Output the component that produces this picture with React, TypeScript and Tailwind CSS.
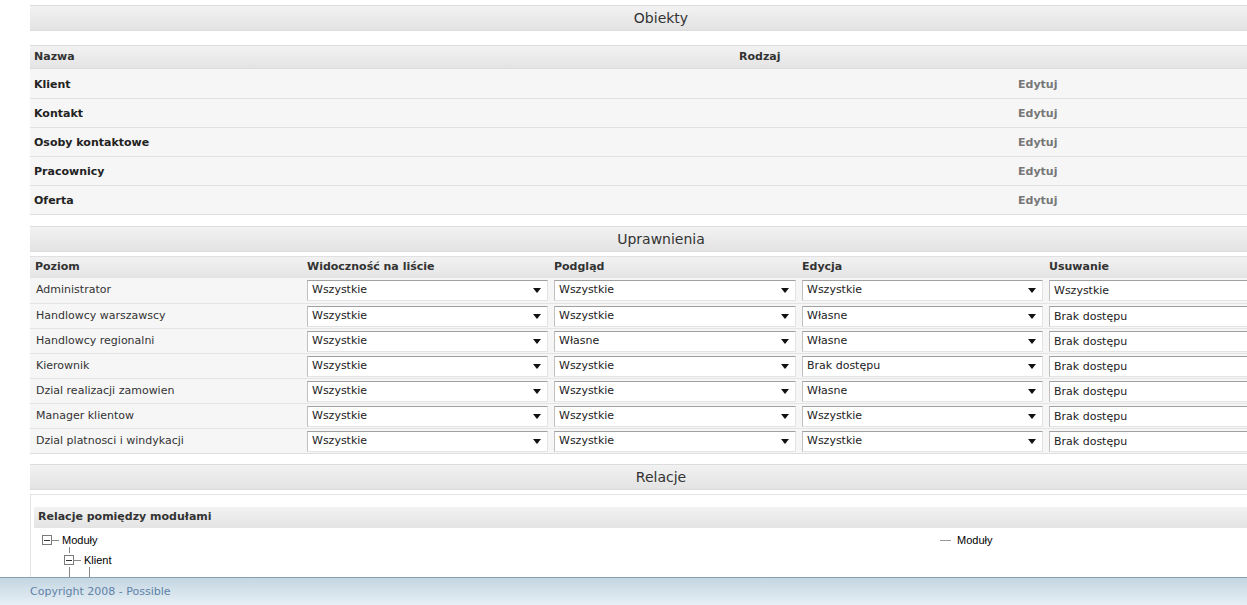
import React from "react";

const font = { fontFamily: '"DejaVu Sans", Verdana, sans-serif' };

function SectionBar({ title }: { title: string }) {
  return (
    <div className="h-[26px] border-y border-[#dcdcdc] bg-gradient-to-b from-[#f2f2f2] to-[#e3e3e3] text-center text-[14px] leading-[24px] text-[#333]">
      {title}
    </div>
  );
}

function Select({ value }: { value: string }) {
  return (
    <div className="flex h-[21px] items-center justify-between border border-[#e3e3e3] border-t-[#a0a0a0] border-l-[#c0c0c0] bg-white pl-[4px] pr-[6px] text-[11px] text-[#222]">
      <span>{value}</span>
      <svg width="8" height="5" viewBox="0 0 8 5">
        <path d="M0 0 H8 L4 5 Z" fill="#111" />
      </svg>
    </div>
  );
}

const objects = ["Klient", "Kontakt", "Osoby kontaktowe", "Pracownicy", "Oferta"];

const perms: [string, string, string, string, string][] = [
  ["Administrator", "Wszystkie", "Wszystkie", "Wszystkie", "Wszystkie"],
  ["Handlowcy warszawscy", "Wszystkie", "Wszystkie", "Własne", "Brak dostępu"],
  ["Handlowcy regionalni", "Wszystkie", "Własne", "Własne", "Brak dostępu"],
  ["Kierownik", "Wszystkie", "Wszystkie", "Brak dostępu", "Brak dostępu"],
  ["Dzial realizacji zamowien", "Wszystkie", "Wszystkie", "Własne", "Brak dostępu"],
  ["Manager klientow", "Wszystkie", "Wszystkie", "Wszystkie", "Brak dostępu"],
  ["Dzial platnosci i windykacji", "Wszystkie", "Wszystkie", "Wszystkie", "Brak dostępu"],
];

function MinusBox() {
  return (
    <span className="flex h-[10px] w-[10px] items-center justify-center border border-[#7a7a7a] bg-white">
      <span className="h-[1px] w-[6px] bg-[#333]" />
    </span>
  );
}

export default function App() {
  return (
    <div className="relative h-[605px] w-[1247px] overflow-hidden bg-white" style={font}>
      <div className="flex h-[577px] flex-col overflow-hidden">
        <div className="ml-[30px] w-[1262px] shrink-0 pt-[5px]">
          <SectionBar title="Obiekty" />

          {/* Obiekty table */}
          <div className="mt-[14px] border-b border-[#dedede]">
            <div className="grid h-[24px] grid-cols-[709px_279px_1fr] items-center border-y border-[#dcdcdc] bg-gradient-to-b from-[#f2f2f2] to-[#e4e4e4] text-[11px] font-bold text-[#333]">
              <span className="pl-[4px]">Nazwa</span>
              <span>Rodzaj</span>
              <span />
            </div>
            {objects.map((o, i) => (
              <div
                key={o}
                className={`grid h-[29px] grid-cols-[709px_279px_1fr] items-center bg-[#f6f6f6] pt-[3px] text-[11px] font-bold ${i > 0 ? "border-t border-[#e2e2e2]" : ""}`}
              >
                <span className="pl-[4px] text-[#222]">{o}</span>
                <span />
                <span className="text-[#777]">Edytuj</span>
              </div>
            ))}
          </div>

          <div className="mt-[11px]">
            <SectionBar title="Uprawnienia" />
          </div>

          {/* Uprawnienia table */}
          <div className="mt-[4px] border-b border-[#dedede] bg-[#f6f6f6]">
            <div className="grid h-[22px] grid-cols-[277px_247px_248px_247px_1fr] items-center border-t border-[#e0e0e0] bg-gradient-to-b from-[#f2f2f2] to-[#e4e4e4] text-[11px] font-bold text-[#333]">
              <span className="pl-[5px]">Poziom</span>
              <span>Widoczność na liście</span>
              <span>Podgląd</span>
              <span>Edycja</span>
              <span>Usuwanie</span>
            </div>
            {perms.map((p, i) => (
              <div
                key={p[0]}
                className={`grid h-[25px] grid-cols-[277px_247px_248px_247px_1fr] items-center text-[11px] text-[#333] ${i > 0 ? "border-t border-[#e4e4e4]" : ""}`}
              >
                <span className="pl-[6px]">{p[0]}</span>
                <div className="pr-[6px]">
                  <Select value={p[1]} />
                </div>
                <div className="pr-[6px]">
                  <Select value={p[2]} />
                </div>
                <div className="pr-[6px]">
                  <Select value={p[3]} />
                </div>
                <div className="h-[21px] border border-[#e3e3e3] border-t-[#a0a0a0] border-l-[#c0c0c0] bg-white pl-[4px] leading-[19px] text-[#222]">
                  {p[4]}
                </div>
              </div>
            ))}
          </div>

          <div className="mt-[10px]">
            <SectionBar title="Relacje" />
          </div>

          {/* Relacje box */}
          <div className="mt-[4px] border-l border-t border-[#e4e4e4] px-[3px] pt-[12px]">
            <div className="flex h-[21px] items-center bg-gradient-to-b from-[#f2f2f2] to-[#e4e4e4] pl-[4px] text-[11px] font-bold text-[#333]">
              Relacje pomiędzy modułami
            </div>
            <div className="relative flex pt-[5px]" style={{ fontFamily: '"Liberation Sans", Arial, sans-serif' }}>
              <div className="w-[906px] pl-[8px] text-[11px] text-black">
                <div className="flex h-[14px] items-center">
                  <MinusBox />
                  <span className="h-[1px] w-[7px] bg-[#888]" />
                  <span className="ml-[3px]">Moduły</span>
                </div>
                <div className="ml-[27px] h-[6px] w-[1px] bg-[#888]" />
                <div className="ml-[22px] flex h-[14px] items-center">
                  <MinusBox />
                  <span className="h-[1px] w-[7px] bg-[#888]" />
                  <span className="ml-[3px]">Klient</span>
                </div>
                <div className="ml-[27px] flex h-[20px]">
                  <div className="w-[1px] bg-[#888]" />
                  <div className="ml-[19px] w-[1px] bg-[#888]" />
                </div>
              </div>
              <div className="flex h-[14px] items-center text-[11px] text-black">
                <span className="h-[1px] w-[11px] bg-[#999]" />
                <span className="ml-[6px]">Moduły</span>
              </div>
            </div>
          </div>
        </div>
      </div>

      {/* Footer */}
      <div className="h-[28px] border-t border-[#8a9fae] bg-gradient-to-b from-[#c4d6e1] to-[#e6eff5] pl-[30px] text-[11px] leading-[27px] text-[#5f82a8]">
        Copyright 2008 - Possible
      </div>
    </div>
  );
}
